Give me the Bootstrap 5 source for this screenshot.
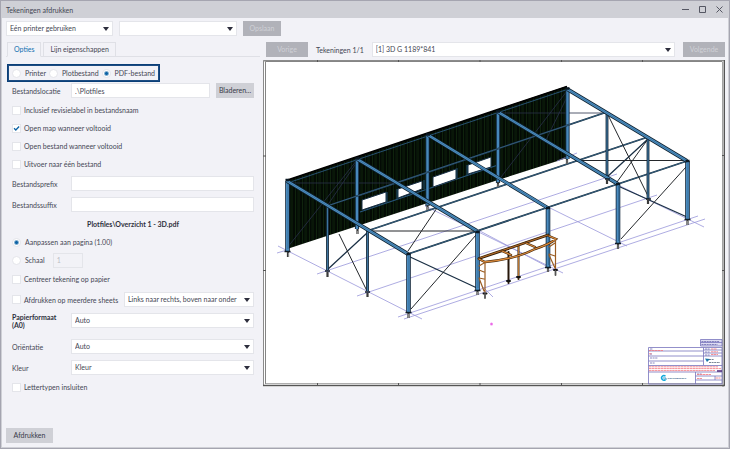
<!DOCTYPE html>
<html lang="nl">
<head>
<meta charset="utf-8">
<meta name="viewport" content="width=device-width, initial-scale=1">
<title>Tekeningen afdrukken</title>
<link href="https://cdn.jsdelivr.net/npm/bootstrap@5.3.0/dist/css/bootstrap.min.css" rel="stylesheet">
<style>
:root{--ink:#454754;--line:#dfe0e6;--grey:#cfd0d6}
body{font-family:Lato,"Open Sans",sans-serif;font-size:7px;line-height:8px;color:var(--ink);background:#f2f2f7}
.app-window{border:2px solid var(--grey);border-top:0;outline:1px solid #a5a5b0;outline-offset:-1px;padding-bottom:4px}
.title-bar{height:18px;background:var(--grey);border-top:1px solid #a5a5b0;padding:0 0 0 4px}
.win-btn{width:17px;height:16px;padding:0;border:0;background:none;color:#555763;line-height:0}
.win-btn svg{width:7px;height:7px}
.main-area{padding:3px 3px 0 4px}
.toolbar{gap:6px}
.columns{gap:9px;margin-top:6px}
.fld{height:15px;border:1px solid #e4e5ea;background-color:#fff;border-radius:0;font-size:7px;line-height:9px;padding:0 3px;color:var(--ink);min-width:0}
select.fld{appearance:none;padding-right:12px;background-image:url("data:image/svg+xml,%3Csvg xmlns='http://www.w3.org/2000/svg' viewBox='0 0 6 4'%3E%3Cpath d='M0 0h6L3 4z' fill='%232d2e3d'/%3E%3C/svg%3E");background-repeat:no-repeat;background-position:right 3px center;background-size:6px 4px}
.tool-btn{height:15px;border:0;border-radius:0;background:var(--grey);color:#383a49;font-size:7px;line-height:9px;padding:0 2px}
.tool-btn:disabled{background:#b1b2b9;color:#d0d1d7;opacity:1}
.w-side{flex:0 0 248px}
.w-printer{width:107px}.w-saved{width:118px}.w-sm-btn{width:38px}.w-nav-btn{width:42px}
.side-tabs{height:15px;border-bottom:1px solid var(--line);padding-left:1px;margin-right:-6px;gap:2px}
.side-tab{height:15px;border:1px solid var(--line);background:#f2f2f7;color:var(--ink);font-size:7px;line-height:13px;padding:0 6px;border-radius:0}
.side-tab.active{border-bottom-color:#f2f2f7;color:#0f6fb0}
.output-kind{border:1px solid #0b3f78;outline:1px solid #1c4c82;outline-offset:-2px;height:18px;width:153px;margin:7px 0 0 1px;padding:0 4px}
.form-rows{padding:0 0 0 6px}
.tick,.dot{appearance:none;flex:none;width:9px;height:9px;background:#fff;border:1px solid #e4e5ea;margin:0 3px 0 0}
.dot{border-radius:50%;margin-right:4px}
.dot:checked{background:radial-gradient(circle,#0d63a5 0 1px,#fff 3px)}
.tick:checked{background:#fff url("data:image/svg+xml,%3Csvg xmlns='http://www.w3.org/2000/svg' viewBox='0 0 8 8'%3E%3Cpath d='M1.2 3.8 3.2 5.8 7 1.8' fill='none' stroke='%230d63a5' stroke-width='1.5'/%3E%3C/svg%3E") center/7px 7px}
.row-loc{height:17px;margin-bottom:2px}
.row-loc .tool-btn{margin-left:6px}
.row-tick{height:18px}
.row-field{height:21px}
.row-centre{height:20px}
.row-gap{margin-top:5px}
.lbl{flex:0 0 59px}
.file-name{height:18px;line-height:18px;color:#2e303c;font-weight:700}
.w-scale{width:30px;background:#f2f2f7!important;color:#bbbcc4!important}
.w-order{width:130px}
.strong-lbl{color:#2e303c;font-weight:700}
.nav-line{padding-left:3px}
.drawing{padding-top:3px}
.drawing svg{width:100%;height:auto;display:block}
.foot{padding:0 4px}
.w-print{width:47px}
</style>
<script src="https://cdn.jsdelivr.net/npm/bootstrap@5.3.0/dist/js/bootstrap.bundle.min.js"></script>
</head>
<body>
<div class="app-window min-vh-100 d-flex flex-column">
<header class="title-bar d-flex align-items-center">
<span class="me-auto">Tekeningen afdrukken</span>
<button class="win-btn" aria-label="Minimaliseren"><svg viewBox="0 0 7 7"><path d="M0 3.5h7" stroke="currentColor"/></svg></button>
<button class="win-btn" aria-label="Maximaliseren"><svg viewBox="0 0 7 7"><path d="M.5.5h6v6h-6z" fill="none" stroke="currentColor"/></svg></button>
<button class="win-btn" aria-label="Sluiten"><svg viewBox="0 0 7 7"><path d="M.5.5l6 6m0-6l-6 6" stroke="currentColor"/></svg></button>
</header>
<main class="main-area flex-grow-1">
<div class="toolbar d-flex">
<select class="fld w-printer" aria-label="Printergebruik"><option>Eén printer gebruiken</option></select>
<select class="fld w-saved" aria-label="Instellingen"><option></option></select>
<button class="tool-btn w-sm-btn" disabled>Opslaan</button>
</div>
<div class="columns d-flex">
<section class="w-side">
<div class="side-tabs d-flex" role="tablist">
<button class="side-tab active" role="tab">Opties</button>
<button class="side-tab" role="tab">Lijn eigenschappen</button>
</div>
<div class="output-kind d-flex align-items-center justify-content-between">
<label class="d-flex align-items-center"><input class="dot" type="radio" name="kind">Printer</label>
<label class="d-flex align-items-center"><input class="dot" type="radio" name="kind">Plotbestand</label>
<label class="d-flex align-items-center"><input class="dot" type="radio" name="kind" checked>PDF-bestand</label>
</div>
<div class="form-rows">
<div class="row-loc d-flex align-items-center"><label class="lbl" for="loc">Bestandslocatie</label><input id="loc" class="fld flex-grow-1" value=".\Plotfiles"><button class="tool-btn w-sm-btn">Bladeren...</button></div>
<label class="row-tick d-flex align-items-center"><input class="tick" type="checkbox">Inclusief revisielabel in bestandsnaam</label>
<label class="row-tick d-flex align-items-center"><input class="tick" type="checkbox" checked>Open map wanneer voltooid</label>
<label class="row-tick d-flex align-items-center"><input class="tick" type="checkbox">Open bestand wanneer voltooid</label>
<label class="row-tick d-flex align-items-center"><input class="tick" type="checkbox">Uitvoer naar één bestand</label>
<div class="row-field d-flex align-items-center"><label class="lbl" for="pre">Bestandsprefix</label><input id="pre" class="fld flex-grow-1"></div>
<div class="row-field d-flex align-items-center"><label class="lbl" for="suf">Bestandssuffix</label><input id="suf" class="fld flex-grow-1"></div>
<div class="file-name text-center">Plotfiles\Overzicht 1 - 3D.pdf</div>
<label class="row-tick d-flex align-items-center"><input class="dot" type="radio" name="fit" checked>Aanpassen aan pagina (1.00)</label>
<div class="row-tick d-flex align-items-center"><input class="dot" id="scale" type="radio" name="fit"><label for="scale">Schaal</label><input class="fld w-scale ms-2" aria-label="Schaalwaarde" value="1" disabled></div>
<label class="row-centre d-flex align-items-center"><input class="tick" type="checkbox">Centreer tekening op papier</label>
<div class="row-field d-flex align-items-center"><input class="tick" id="multi" type="checkbox"><label for="multi" class="me-auto text-nowrap">Afdrukken op meerdere sheets</label><select class="fld w-order" aria-label="Volgorde"><option>Links naar rechts, boven naar onder</option></select></div>
<div class="row-field d-flex align-items-center"><label class="lbl strong-lbl" for="size">Papierformaat<br>(A0)</label><select id="size" class="fld flex-grow-1"><option>Auto</option></select></div>
<div class="row-field row-gap d-flex align-items-center"><label class="lbl" for="ori">Oriëntatie</label><select id="ori" class="fld flex-grow-1"><option>Auto</option></select></div>
<div class="row-field d-flex align-items-center"><label class="lbl" for="col">Kleur</label><select id="col" class="fld flex-grow-1"><option>Kleur</option></select></div>
<label class="row-tick d-flex align-items-center"><input class="tick" type="checkbox">Lettertypen insluiten</label>
</div>
</section>
<section class="flex-grow-1">
<div class="nav-line d-flex align-items-center">
<button class="tool-btn w-nav-btn" disabled>Vorige</button>
<label for="dwg" class="mx-2">Tekeningen 1/1</label>
<select id="dwg" class="fld flex-grow-1"><option>[1] 3D G 1189*841</option></select>
<button class="tool-btn w-nav-btn ms-2" disabled>Volgende</button>
</div>
<div class="drawing">
<svg viewBox="263 60 462 327" role="img" aria-label="3D-overzicht van staalconstructie">
<defs>
<pattern id="sheet" width="7" height="8" patternUnits="userSpaceOnUse"><path d="M0 0h7v8H0z" fill="#030a04"/><path d="M1.500 0v8M5 0v8" stroke="#12290f" stroke-width=".8"/><path d="M3.500 0v8" stroke="#0a1c0c" stroke-width=".5"/></pattern>
<path id="rafters" d="M287 181 408 254M357 159 477 231M428 135 548 208M498 112 618 184M567 89 687 161"/>
<path id="backposts" d="M357 159V229M427.500 135V206M498 112V183M567.500 90V159"/>
<path id="posts" d="M287.500 181V251M408.500 254V312M477.500 231V290M548 208V267M618 184V243M687.500 161V219"/>
<path id="midposts" d="M327.500 206V270M367.500 231V291M607 113V179M648 138V199"/>
<path id="purlins" d="M327 206 607 112M367 231 648 137M408 254 687 161"/>
</defs>
<!-- sheet border -->
<path d="M263 60h462v327H263z" fill="#fff"/>
<path d="M263 60h462v2H263zM722 60h2v327h-2z" fill="#c8c8c8"/>
<path d="M263.500 386V60.500H724" fill="none" stroke="#8b8b8b"/>
<path d="M265.500 384V61.500H722" fill="none" stroke="#858585"/>
<path d="M265.500 383.500H722.500V62" fill="none" stroke="#999" stroke-width=".8"/>
<path d="M263 385.500H724.500V60" fill="none" stroke="#555" stroke-width="1.300"/>
<path d="M317.500 60v2M398.500 60v2M480 60v2M561.500 60v2M642.500 60v2M317.500 383v3M398.500 383v3M480 383v3M561.500 383v3M642.500 383v3M263 156h3M263 270.500h3M722 155.500h3M722 270.500h3" stroke="#555"/>
<!-- cladding -->
<path d="M287 180 567 86V158L498 180 287 249Z" fill="url(#sheet)"/>
<path d="M286 180.500 567 86.500" stroke="#000" stroke-width="1.800"/>
<path d="M289 182.500 567 89.500" stroke="#2e608b" stroke-width=".8"/>
<path d="M287 248 357 160M498 181 567 91M327 206 357 162M545 142 567 97M287 183H397M498 113H606" stroke="#28304a" stroke-width=".8" fill="none"/>
<path d="M358 196 498 149M360 212 498 165" stroke="#28567c" stroke-width="1.200"/>
<path d="M362 200 386 192V202L362 210ZM398 189 422 181V189L398 198ZM433 177 456 169V179L433 187ZM468 165 491 157V167L468 174Z" fill="#fff" stroke="#172e44" stroke-width="1"/>
<path d="M387 192v10M397 189v10M424 180v9M457 168v10M467 165v10" stroke="#214c70" stroke-width="1"/>
<!-- grid lines -->
<g stroke="#9997da" stroke-width=".8" fill="none">
<path d="M398 317 698 216M404 319 705 219M357 296 657 195M317 274 617 174M557 161 577 153M277 253 287 250M278 246 422 319M425 206 563 273M548 207 627 246M478 230 550 268M618 185 704 227M483 287 493 297"/>
</g>
<!-- secondary steel -->
<use href="#backposts" stroke="#12263a" stroke-width="4.200"/><use href="#backposts" stroke="#4788bb" stroke-width="2.400"/>
<use href="#purlins" stroke="#16293a" stroke-width="1.700"/><use href="#purlins" stroke="#3f7397" stroke-width=".7"/>
<path d="M408 256 477 288M327 270 367 233M618 186 687 217M607 177 648 139" stroke="#1b3045" stroke-width="1.300"/>
<path d="M339 234 367 291M408 251 437 208M411 309 476 235M368 231H475M575 160.500H685M608 115 648 196M617 182 648 139M621 239 686 167" stroke="#24272b" stroke-width="1"/>
<use href="#midposts" stroke="#10202f" stroke-width="2.800"/><use href="#midposts" stroke="#3d749e" stroke-width="1.300"/>
<!-- main frames -->
<use href="#posts" stroke="#12263a" stroke-width="4.600"/><use href="#posts" stroke="#4a8cc0" stroke-width="3"/>
<path d="M288 183v66M409 256v55M478 233v55M548.500 210v55M618.500 186v55M688 163v55" stroke="#2b5a80" stroke-width=".6"/>
<use href="#rafters" stroke="#10222f" stroke-width="3.800"/><use href="#rafters" stroke="#4f92c6" stroke-width="2.300"/><use href="#rafters" stroke="#2a587c" stroke-width=".5"/>
<path d="M285.500 180h3.500M355.500 158.500h4M426 134.500h4M496 111.500h4M565.500 88.500h4M406.500 254h4M475.500 232h4M546 208h4M616 184h4M685.500 161h4" stroke="#0b1823" stroke-width="2.600"/>
<path d="M284.500 251.500h6M405.500 312.500h6M474.500 290.500h6M545 267.500h6M615 243.500h6M684.500 219.500h6M325 271h5M365 292h5M605 179h5M646 199h5" stroke="#101c27" stroke-width="1.500"/>
<path d="M288 252v5M327.500 272v5M367.500 293v4M408.500 313v5M477.500 291v4M548 268v4M618 244v5M687.500 220v5M357.500 229v5M427.500 205v5M498 182v5M567 159v5M607 179v5M648 199v5" stroke="#3b3b3b" stroke-width="2.200"/>
<path d="M288.500 253v4M408.500 314v4M477.500 292v3M548 269v3M618 245v4M687.500 221v4M357.500 231v3M427.500 207v3M498 184v3M567 160v4" stroke="#aaa" stroke-width=".7"/>
<!-- canopy -->
<g fill="none" stroke-linecap="round">
<path d="M508.500 252V283" stroke="#26170a" stroke-width="2"/><path d="M518.500 245V279" stroke="#3b240e" stroke-width="2"/><path d="M518.500 246V276" stroke="#b87530" stroke-width="1"/>
<path d="M479 258.500 548 235" stroke="#2d1b0a" stroke-width="2.800"/><path d="M480 258 548 235" stroke="#b36b27" stroke-width="1.200"/>
<path d="M479 259 485 262Q516 259 535 249 550 244 556 239L549 236M502 251 511 255M526 243 535 247" stroke="#3d240d" stroke-width="2.400"/>
<path d="M479 259 485 262Q516 259 535 249 550 244 556 239L549 236M502 251 511 255M526 243 535 247" stroke="#da8a3b" stroke-width="1.300"/>
<path d="M485 263V292M555.500 240V269M479 266 484 263M479 270 484 272M479 278 484 279M479 278 484 291M549 247 555 243M549 254 555 256M549 255 555 268" stroke="#9b5d23" stroke-width="1.200"/>
<path d="M483.500 293.500h3M554 270h3M507 281h3M517 277h3" stroke="#111" stroke-width="2"/><path d="M485 294v4M555.500 271v4" stroke="#555" stroke-width="1.800"/>
</g>
<circle cx="491.500" cy="324" r="1.500" fill="#f184ee"/><path d="M491 324h1" stroke="#e055de"/>
<!-- title block -->
<g fill="none" stroke="#7774bd" stroke-width=".8">
<path d="M700.500 339.500H722V346H700.500ZM700.500 342.500H722" fill="#dddcf2"/>
<path d="M648.500 347.500H722V384H648.500ZM648.500 351H703M648.500 356H722M648.500 361H703M648.500 365.500H722M648.500 372H722M703.500 347.500V365M695.500 372V384M703.500 350H722M703.500 353H722M695.500 376H722M695.500 380H722M715 376V380"/>
</g>
<path d="M701.500 341.500h18M701.500 344.500h16M650 349h3M650 354h2M650 358h8M650 363h5M705 349h5M705 352h5M705 355h5M697 374h5" stroke="#6c69af" stroke-width=".8" stroke-dasharray="2 .6"/>
<path d="M649 350.500h14M649 353.800h3M711 349h6M711 351.800h7M711 354.500h7M649 366.800h69M649 368.600h72M649 370.600h66M697 374.500h14M697 378.500h5M715.500 378h5" stroke="#f2747c" stroke-width=".8" stroke-dasharray="2.500 .4"/>
<path d="M717 371h5" stroke="#52307f" stroke-width="1.600"/>
<path d="M705 358.500l5 .5-3 3z" fill="#1876a7"/><path d="M709 359.500h5M709 362.500h11" stroke="#405168" stroke-width=".7" stroke-dasharray="2 .6"/>
<path d="M665.500 376.200A2.300 2.300 0 1 0 665.500 379.600" fill="none" stroke="#10a8dc" stroke-width="1.500"/><path d="M663 378h3v2" fill="none" stroke="#1287bc" stroke-width=".8"/>
<text x="667.500" y="379" font-size="2.600" fill="#22527c" font-weight="700">CONSTRUSOFT</text>
</svg>
</div>
</section>
</div>
</main>
<footer class="foot"><button class="tool-btn w-print">Afdrukken</button></footer>
</div>
</body>
</html>
